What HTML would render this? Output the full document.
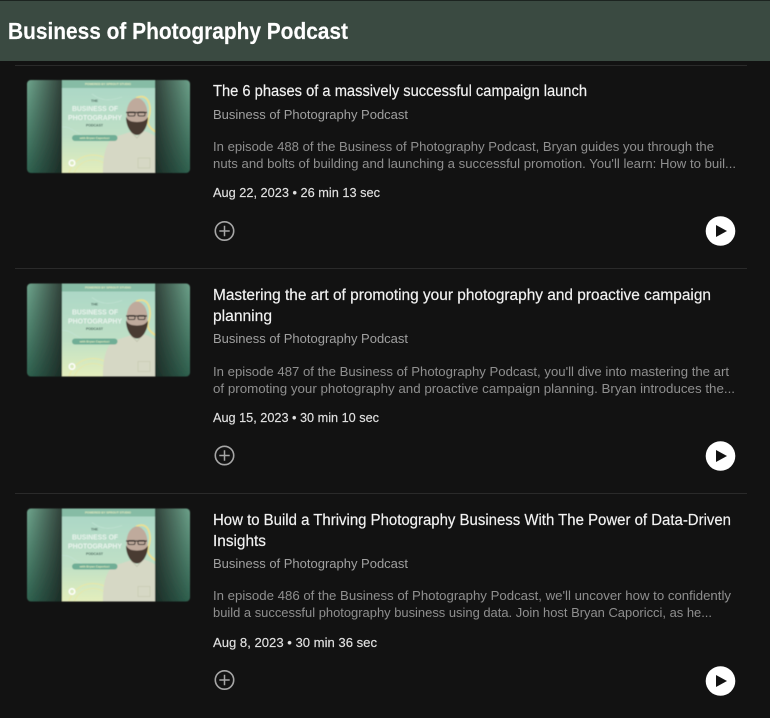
<!DOCTYPE html>
<html><head><meta charset="utf-8"><style>
html,body{margin:0;padding:0;background:#121212;width:770px;height:718px;overflow:hidden}
svg{display:block}
text{font-family:"Liberation Sans",sans-serif}
.h{font-size:23px;font-weight:700;fill:#fff;stroke:#fff;stroke-width:.15}
.t{font-size:15.5px;fill:#f2f2f2;stroke:#f2f2f2;stroke-width:.18}
.s{font-size:13px;fill:#a0a0a0}
.d{font-size:13px;fill:#8f8f8f}
.a{font-size:13px;fill:#e0e0e0;stroke:#e0e0e0;stroke-width:.15}
.c1{font-size:7px;font-weight:700;fill:#eaf4ee;text-anchor:middle;font-family:"Liberation Sans",sans-serif}
.c2{font-size:3.5px;font-weight:700;fill:#46665a;text-anchor:middle}
.c3{font-size:3px;font-weight:700;fill:#e6eec2;text-anchor:middle}
</style></head><body>
<svg width="770" height="718" viewBox="0 0 770 718" xmlns="http://www.w3.org/2000/svg">
<defs>
<linearGradient id="side" x1="0" y1="0" x2="0" y2="1"><stop offset="0" stop-color="#6fa58d"/><stop offset="1" stop-color="#2f6350"/></linearGradient>
<linearGradient id="shL" x1="0" y1="0" x2="1" y2="0"><stop offset="0" stop-color="#121212" stop-opacity="0"/><stop offset="1" stop-color="#121212" stop-opacity=".68"/></linearGradient>
<linearGradient id="shR" x1="1" y1="0" x2="0" y2="0"><stop offset="0" stop-color="#121212" stop-opacity="0"/><stop offset="1" stop-color="#121212" stop-opacity=".68"/></linearGradient>
<linearGradient id="cov" x1="0" y1="0" x2="0" y2="1"><stop offset="0" stop-color="#a9d6c6"/><stop offset=".6" stop-color="#bfe0c6"/><stop offset="1" stop-color="#e4eebc"/></linearGradient>
<filter id="b" x="-5%" y="-5%" width="110%" height="110%"><feGaussianBlur stdDeviation=".4"/></filter>
<clipPath id="c1"><rect x="0" y="0" width="93" height="93"/></clipPath>
<g id="art">
<rect x="0" y="0" width="163" height="93" rx="4" fill="url(#side)"/>
<rect x="0" y="0" width="35" height="93" fill="url(#shL)"/>
<rect x="128" y="0" width="36" height="93" fill="url(#shR)"/>
<g transform="translate(35,0)" clip-path="url(#c1)">
<rect width="93" height="93" fill="url(#cov)"/>
<rect width="93" height="8" fill="#86bca5"/>
<path d="M0 47c8-1 12 5 20 8M30 14c8 6 16 8 30 3" fill="none" stroke="#c4e4d6" stroke-width=".6"/>
<circle cx="31" cy="100" r="25" fill="none" stroke="#e9e7a6" stroke-width="1"/>
<circle cx="31" cy="100" r="20" fill="none" stroke="#e9e7a6" stroke-width=".7"/>
<path d="M74 18c6-3 11-1 13 5 2 6 1 11-1 17-1 5 3 9 8 12" fill="none" stroke="#ecdf90" stroke-width="1.8"/>
<path d="M41 93c0-12 1-24 7-32 5-5 12-6 20-9l7 4 7-5c4 1 8 3 11 5v37z" fill="#d6d8c5"/>
<path d="M69 52l6 6 6-7" fill="none" stroke="#bfc2ad" stroke-width=".8"/>
<rect x="76" y="78" width="12" height="10" fill="none" stroke="#c4c7b0" stroke-width=".6"/>
<ellipse cx="75" cy="34" rx="10.500" ry="16" fill="#bfaa9c"/>
<path d="M64 37c0 9 5 18 11 18s11-9 11-18c-2 3-4 5-11 5s-9-2-11-5z" fill="#4a3b33"/>
<path d="M64 32.500h21" stroke="#2e2a28" stroke-width="1.3"/>
<rect x="66" y="32" width="7" height="4" rx="1.500" fill="none" stroke="#2e2a28" stroke-width="1"/>
<rect x="76" y="32" width="7" height="4" rx="1.500" fill="none" stroke="#2e2a28" stroke-width="1"/>
<rect x="10" y="55" width="45.500" height="6" rx="3" fill="#6fae96"/>
<circle cx="10" cy="83" r="2.700" fill="none" stroke="#fff" stroke-width="1.500"/>
</g>
</g>
<g id="plus" fill="none" stroke="#a6a6a6"><circle cx="0" cy="0" r="9.200" stroke-width="1.600"/><path d="M0-5.200V5.200M-5.200 0H5.200" stroke-width="1.500"/></g>
<g id="play"><circle cx="0" cy="0" r="14.800" fill="#fff"/><path d="M-4.500-6V6L6.500 0z" fill="#121212"/></g>
</defs>

<rect width="770" height="718" fill="#121212"/>
<rect x="0" y="0" width="770" height="61" fill="#3a4a41"/>
<rect x="0" y="0" width="770" height="1" fill="#1c2420"/>
<text class="h" x="8" y="39" textLength="340" lengthAdjust="spacingAndGlyphs">Business of Photography Podcast</text>
<rect x="15" y="65" width="732" height="1" fill="#2a2a2a"/>
<rect x="15" y="268" width="732" height="1" fill="#2a2a2a"/>
<rect x="15" y="493" width="732" height="1" fill="#2a2a2a"/>

<g transform="translate(27,80)" filter="url(#b)"><use href="#art"/>
<g transform="translate(35,0)"><text class="c3" x="46" y="5.200">POWERED BY SPROUT STUDIO</text><text class="c2" x="32.500" y="22">THE</text><text class="c1" x="33" y="31" textLength="46" lengthAdjust="spacingAndGlyphs">BUSINESS OF</text><text class="c1" x="33" y="40" textLength="54" lengthAdjust="spacingAndGlyphs">PHOTOGRAPHY</text><text class="c2" x="32.500" y="46.500">PODCAST</text><text class="c3" x="32.500" y="59.200">with Bryan Caporicci</text></g></g>
<text class="t" x="213" y="96" textLength="374" lengthAdjust="spacingAndGlyphs">The 6 phases of a massively successful campaign launch</text>
<text class="s" x="213" y="119" textLength="195" lengthAdjust="spacingAndGlyphs">Business of Photography Podcast</text>
<text class="d" x="213" y="151" textLength="501" lengthAdjust="spacingAndGlyphs">In episode 488 of the Business of Photography Podcast, Bryan guides you through the</text>
<text class="d" x="213" y="168" textLength="523" lengthAdjust="spacingAndGlyphs">nuts and bolts of building and launching a successful promotion. You'll learn: How to buil...</text>
<text class="a" x="213" y="197" textLength="167" lengthAdjust="spacingAndGlyphs">Aug 22, 2023 • 26 min 13 sec</text>
<use href="#plus" x="224.500" y="231"/>
<use href="#play" x="720.500" y="231"/>

<g transform="translate(27,283.500)" filter="url(#b)"><use href="#art"/>
<g transform="translate(35,0)"><text class="c3" x="46" y="5.200">POWERED BY SPROUT STUDIO</text><text class="c2" x="32.500" y="22">THE</text><text class="c1" x="33" y="31" textLength="46" lengthAdjust="spacingAndGlyphs">BUSINESS OF</text><text class="c1" x="33" y="40" textLength="54" lengthAdjust="spacingAndGlyphs">PHOTOGRAPHY</text><text class="c2" x="32.500" y="46.500">PODCAST</text><text class="c3" x="32.500" y="59.200">with Bryan Caporicci</text></g></g>
<text class="t" x="213" y="300" textLength="498" lengthAdjust="spacingAndGlyphs">Mastering the art of promoting your photography and proactive campaign</text>
<text class="t" x="213" y="321" textLength="59" lengthAdjust="spacingAndGlyphs">planning</text>
<text class="s" x="213" y="343" textLength="195" lengthAdjust="spacingAndGlyphs">Business of Photography Podcast</text>
<text class="d" x="213" y="376" textLength="516" lengthAdjust="spacingAndGlyphs">In episode 487 of the Business of Photography Podcast, you'll dive into mastering the art</text>
<text class="d" x="213" y="393" textLength="522" lengthAdjust="spacingAndGlyphs">of promoting your photography and proactive campaign planning. Bryan introduces the...</text>
<text class="a" x="213" y="422" textLength="166" lengthAdjust="spacingAndGlyphs">Aug 15, 2023 • 30 min 10 sec</text>
<use href="#plus" x="224.500" y="455.500"/>
<use href="#play" x="720.500" y="456"/>

<g transform="translate(27,508.500)" filter="url(#b)"><use href="#art"/>
<g transform="translate(35,0)"><text class="c3" x="46" y="5.200">POWERED BY SPROUT STUDIO</text><text class="c2" x="32.500" y="22">THE</text><text class="c1" x="33" y="31" textLength="46" lengthAdjust="spacingAndGlyphs">BUSINESS OF</text><text class="c1" x="33" y="40" textLength="54" lengthAdjust="spacingAndGlyphs">PHOTOGRAPHY</text><text class="c2" x="32.500" y="46.500">PODCAST</text><text class="c3" x="32.500" y="59.200">with Bryan Caporicci</text></g></g>
<text class="t" x="213" y="525" textLength="518" lengthAdjust="spacingAndGlyphs">How to Build a Thriving Photography Business With The Power of Data-Driven</text>
<text class="t" x="213" y="546" textLength="53" lengthAdjust="spacingAndGlyphs">Insights</text>
<text class="s" x="213" y="568" textLength="195" lengthAdjust="spacingAndGlyphs">Business of Photography Podcast</text>
<text class="d" x="213" y="600" textLength="518" lengthAdjust="spacingAndGlyphs">In episode 486 of the Business of Photography Podcast, we'll uncover how to confidently</text>
<text class="d" x="213" y="617" textLength="499" lengthAdjust="spacingAndGlyphs">build a successful photography business using data. Join host Bryan Caporicci, as he...</text>
<text class="a" x="213" y="647" textLength="164" lengthAdjust="spacingAndGlyphs">Aug 8, 2023 • 30 min 36 sec</text>
<use href="#plus" x="224.500" y="680"/>
<use href="#play" x="720.500" y="681"/>
</svg>
</body></html>
